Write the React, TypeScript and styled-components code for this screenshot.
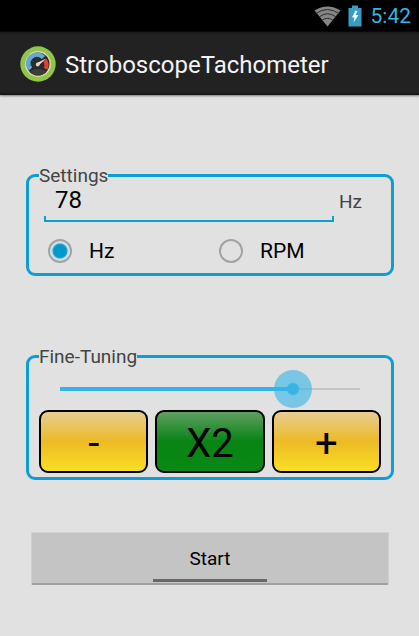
import React, { useState } from "react";
import styled, { createGlobalStyle } from "styled-components";

const BLUE = "#0c9fd4";
const HOLO = "#33b5e5";

const GlobalStyle = createGlobalStyle`
  *, *::before, *::after { box-sizing: border-box; }
  body {
    margin: 0;
    background: #e1e1e1;
    color: #000;
    font-family: Roboto, "Noto Sans", sans-serif;
  }
  button, input { font-family: inherit; color: inherit; }
`;

const Screen = styled.div`
  min-height: 100vh;
  display: flex;
  flex-direction: column;
`;

const StatusBar = styled.div`
  height: 32px;
  padding-right: 8px;
  display: flex;
  align-items: center;
  justify-content: flex-end;
  background: #000;
  color: ${HOLO};
  font-size: 21px;
  line-height: 32px;
  svg { display: block; flex: none; }
`;

const BatterySlot = styled.span`
  margin: 0 9px 0 7px;
`;

const ActionBar = styled.header`
  height: 63px;
  padding-left: 20px;
  display: flex;
  align-items: center;
  gap: 9px;
  background: #222;
  border-top: 2px solid #1a1a1a;
  border-bottom: 2px solid #181818;
  box-shadow: 0 1px 2px #777;
  svg { display: block; flex: none; }
`;

const Title = styled.h1`
  margin: 0;
  padding-top: 2px;
  color: #f3f3f3;
  font-size: 24px;
  font-weight: 400;
  line-height: 32px;
`;

const Content = styled.main`
  padding: 70px 25px 51px 26px;
  display: flex;
  flex-direction: column;
`;

const Group = styled.fieldset<{ $gap: number }>`
  min-width: 0;
  margin: 0 0 ${(p) => p.$gap}px;
  padding: 0 10px 4px;
  border: 3px solid ${BLUE};
  border-radius: 9px;
`;

const Legend = styled.legend`
  height: 21px;
  padding: 0;
  color: #444;
  font-size: 19px;
  line-height: 21px;
`;

const ValueRow = styled.div`
  display: flex;
  align-items: center;
  gap: 5px;
  padding: 0 19px 0 5px;
`;

const ValueInput = styled.input`
  flex: 1;
  min-width: 0;
  height: 36px;
  padding: 0 11px 8px;
  border: 0;
  outline: 0;
  font-size: 24px;
  background:
    linear-gradient(${BLUE}, ${BLUE}) left bottom / 100% 2px no-repeat,
    linear-gradient(${BLUE}, ${BLUE}) left bottom / 2px 6px no-repeat,
    linear-gradient(${BLUE}, ${BLUE}) right bottom / 2px 6px no-repeat;
`;

const Unit = styled.label`
  padding-bottom: 4px;
  color: #444;
  font-size: 19px;
  line-height: 24px;
`;

const RadioRow = styled.div`
  display: grid;
  grid-template-columns: 1fr 1fr;
  padding: 17px 0 6px;
`;

const RadioLabel = styled.label`
  display: flex;
  align-items: center;
  gap: 17px;
  padding-left: 9px;
  font-size: 21px;
  line-height: 24px;
`;

const Radio = styled.input`
  appearance: none;
  flex: none;
  width: 24px;
  height: 24px;
  margin: 0;
  border: 2px solid #a2a2a2;
  border-radius: 50%;
  &:checked {
    background: radial-gradient(circle, #0099cc 0 6px, #3a9dc0 7px, #b9dfec 8px, #d3e7ee 10px);
  }
`;

const SliderRow = styled.div`
  display: flex;
  align-items: center;
  height: 43px;
  padding: 0 2px;
`;

const Slider = styled.input`
  appearance: none;
  width: 100%;
  height: 38px;
  margin: 0;
  background: transparent;
  outline: 0;
  &::-webkit-slider-runnable-track {
    height: 38px;
    padding: 0;
    background:
      linear-gradient(${HOLO}, ${HOLO}) 19px center / calc((100% - 38px) * var(--fill)) 4px no-repeat,
      linear-gradient(#c6c6c6, #c6c6c6) center / calc(100% - 38px) 2px no-repeat;
  }
  &::-webkit-slider-thumb {
    appearance: none;
    width: 38px;
    height: 38px;
    border: 0;
    border-radius: 50%;
    background: radial-gradient(circle, ${HOLO} 0 5px, rgba(51, 181, 229, 0.6) 7px);
  }
`;

const ButtonRow = styled.div`
  display: grid;
  grid-template-columns: repeat(3, 1fr);
  gap: 7px;
`;

const TuneButton = styled.button<{ $tone: "yellow" | "green" }>`
  height: 63px;
  padding: 4px 0 0;
  border: 2px solid #000;
  border-radius: 9px;
  font-size: 40px;
  line-height: 55px;
  background: ${(p) =>
    p.$tone === "yellow"
      ? "linear-gradient(#e6cd92, #edba25 50%, #f9df25)"
      : "linear-gradient(#5f9f62, #088414 50%, #098915)"};
`;

const StartButton = styled.button`
  height: 53px;
  margin: 0 5px;
  padding: 2px 0 0;
  display: flex;
  flex-direction: column;
  align-items: center;
  border: 1px solid #d0d0d0;
  border-bottom: 2px solid #a0a0a0;
  border-radius: 2px;
  background: #c4c4c4;
  font-size: 19px;
  line-height: 48px;
  &::after {
    content: "";
    flex: none;
    width: 32%;
    height: 3px;
    margin-top: -4px;
    background: #686868;
  }
`;

function WifiIcon() {
  return (
    <svg width="27" height="21" viewBox="0 0 27 21" aria-hidden="true">
      <path d="M13.5 20.5 0.5 4.5Q13.5-3.5 26.5 4.5Z" fill="#858585" />
      <g fill="none" stroke="#2c2c2c" strokeWidth="1">
        <path d="M2 7.5Q13.5-0.5 25 7.5" />
        <path d="M5 11Q13.5 4.500 22 11" />
        <path d="M8 14.500Q13.500 10 19 14.500" />
      </g>
    </svg>
  );
}

function BatteryIcon() {
  return (
    <svg width="14" height="22" viewBox="0 0 14 22" aria-hidden="true">
      <path d="M4 0.500H10V3H13.500V21.500H0.500V3H4Z" fill="#3b9cc3" />
      <path d="M7.500 5.500 4 12.500H6.500L5.500 17.500 10.500 10H7.800L9.500 6Z" fill="#f2fbff" />
    </svg>
  );
}

function GaugeIcon() {
  return (
    <svg width="36" height="36" viewBox="0 0 36 36" aria-hidden="true">
      <circle cx="18" cy="18" r="17.700" fill="#8fc649" />
      <circle cx="18" cy="18" r="12.900" fill="#e9d8ac" />
      <circle cx="18" cy="18" r="11.500" fill="#262a30" />
      <path d="M10.500 23A8.300 8.300 0 0 1 23.500 11.500" fill="none" stroke="#62a9d6" strokeWidth="4.400" />
      <path d="M24.800 14A8.600 8.600 0 0 1 25.600 22.800" fill="none" stroke="#e5412f" strokeWidth="4.200" />
      <path d="M11.500 14.500 14 16M16.500 10.500 17.300 13.500M9.500 19H12.500" stroke="#2c5878" strokeWidth="0.600" />
      <path d="M9.500 25.500Q18 20 26.500 25.500Q18 33.500 9.500 25.500Z" fill="#3c3c3c" />
      <path d="M16.600 17.200 26 12.600 18.600 19.600Z" fill="#f3e5bd" />
      <circle cx="17.700" cy="18.500" r="1.900" fill="#ead5a1" />
    </svg>
  );
}

export default function App() {
  const [value, setValue] = useState("78");
  const [unit, setUnit] = useState("Hz");
  const [fine, setFine] = useState(78);
  const fill = { "--fill": (fine - 1) / 99 } as React.CSSProperties;

  return (
    <>
      <GlobalStyle />
      <Screen>
        <StatusBar>
          <WifiIcon />
          <BatterySlot>
            <BatteryIcon />
          </BatterySlot>
          <span>5:42</span>
        </StatusBar>
        <ActionBar>
          <GaugeIcon />
          <Title>StroboscopeTachometer</Title>
        </ActionBar>
        <Content>
          <Group $gap={70}>
            <Legend>Settings</Legend>
            <ValueRow>
              <ValueInput id="rate" value={value} onChange={(e) => setValue(e.target.value)} />
              <Unit htmlFor="rate">{unit}</Unit>
            </ValueRow>
            <RadioRow>
              {["Hz", "RPM"].map((name) => (
                <RadioLabel key={name}>
                  <Radio type="radio" name="unit" checked={unit === name} onChange={() => setUnit(name)} />
                  {name}
                </RadioLabel>
              ))}
            </RadioRow>
          </Group>
          <Group $gap={52}>
            <Legend>Fine-Tuning</Legend>
            <SliderRow>
              <Slider
                type="range"
                aria-label="Fine-Tuning"
                min={1}
                max={100}
                value={fine}
                style={fill}
                onChange={(e) => setFine(Number(e.target.value))}
              />
            </SliderRow>
            <ButtonRow>
              <TuneButton type="button" $tone="yellow" onClick={() => setFine(Math.max(1, fine - 1))}>-</TuneButton>
              <TuneButton type="button" $tone="green">X2</TuneButton>
              <TuneButton type="button" $tone="yellow" onClick={() => setFine(Math.min(100, fine + 1))}>+</TuneButton>
            </ButtonRow>
          </Group>
          <StartButton type="button">Start</StartButton>
        </Content>
      </Screen>
    </>
  );
}
